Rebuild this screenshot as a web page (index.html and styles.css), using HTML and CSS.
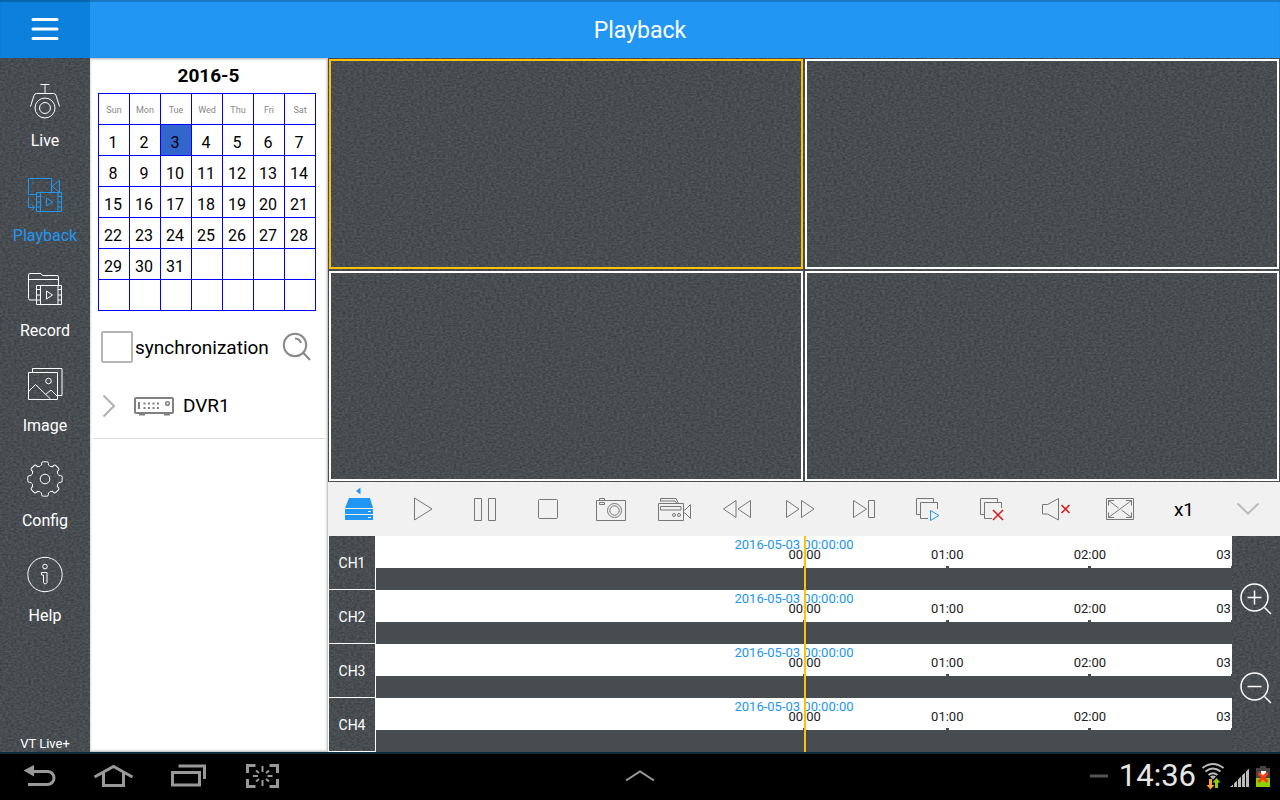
FILE: index.html
```html
<!DOCTYPE html>
<html lang="en">
<head>
<meta charset="utf-8">
<title>Playback</title>
<link rel="stylesheet" href="styles.css">
</head>
<body>
<svg class="defs" aria-hidden="true">
  <symbol id="film" viewBox="0 0 48 48">
    <path d="M15.5 20.500h25v19h-25zM19.500 20.500v19M37 20.500v19M15.500 24.500h4M15.500 30h4M15.500 35h4M37 24.500h3.500M37 30h3.500M37 35h3.500M25.500 26v8l6-4z"/>
  </symbol>
  <defs>
    <path id="tooth" d="M-5.200 -12.500Q-4 -14 -3.400 -14V-15.600Q-3.400 -17.200 -1.800 -17.200H1.800Q3.400 -17.200 3.400 -15.600V-14Q4 -14 5.200 -12.500"/>
  </defs>
</svg>

<header class="topbar">
  <button class="menu" aria-label="Menu">
    <svg width="48" height="48" viewBox="0 0 48 48"><path d="M12 14.500h24M12 24h24M12 33.500h24"/></svg>
  </button>
  <h1 class="topbar-title">Playback</h1>
</header>

<main class="app">
  <nav class="sidebar">
    <a class="side-item" href="#live">
      <svg class="side-icon" viewBox="0 0 48 48"><path d="M19.500 7.500h9M24 7.500v9M9.500 29.500L13 18.500Q13.700 16.500 15.500 16.500H32.500Q34.300 16.500 35 18.500L38.500 29.500"/><circle cx="24" cy="31" r="10"/><circle cx="24" cy="31" r="5.500"/></svg>
      Live</a>
    <a class="side-item active" href="#playback">
      <svg class="side-icon" viewBox="0 0 48 48"><path d="M15.500 22.500H7.500V6.500H30.500V20.500M38.500 20V8.500L31 14.500zM11.500 11h1M7.500 25.500V35.500H13M10.500 32.500l3 3-3 3"/><use href="#film"/></svg>
      Playback</a>
    <a class="side-item" href="#record">
      <svg class="side-icon" viewBox="0 0 48 48"><path d="M15.500 33H9Q7.500 33 7.500 31.500V8Q7.500 6.500 9 6.500H20L21.500 8.500H36Q37.500 8.500 37.500 10V18.500M7.500 12.500h30"/><use href="#film" y="-2"/></svg>
      Record</a>
    <a class="side-item" href="#image">
      <svg class="side-icon" viewBox="0 0 48 48"><path d="M7.500 10.500h29v27h-29zM11.500 10.500V6.500H41V33.500H36.500M7.500 29.500L14.500 22.500L29.500 37M24.500 32.500L30 28L36.500 34.500"/><circle cx="27.500" cy="19" r="2.800"/></svg>
      Image</a>
    <a class="side-item" href="#config">
      <svg class="side-icon" viewBox="-24 -22 48 48"><circle r="4.800"/><use href="#tooth"/><use href="#tooth" transform="rotate(45)"/><use href="#tooth" transform="rotate(90)"/><use href="#tooth" transform="rotate(135)"/><use href="#tooth" transform="rotate(180)"/><use href="#tooth" transform="rotate(225)"/><use href="#tooth" transform="rotate(270)"/><use href="#tooth" transform="rotate(315)"/></svg>
      Config</a>
    <a class="side-item" href="#help">
      <svg class="side-icon" viewBox="0 0 48 48"><circle cx="24" cy="22.500" r="17.200"/><circle cx="24" cy="14.500" r="2.300"/><path d="M20.500 20.500h5.500v10a1.800 1.800 0 0 1-3.500 0v-7.500h-2z"/></svg>
      Help</a>
    <p class="brand">VT Live+</p>
  </nav>

  <aside class="panel">
    <h2 class="month">2016-5</h2>
    <table class="calendar">
      <thead><tr><th>Sun</th><th>Mon</th><th>Tue</th><th>Wed</th><th>Thu</th><th>Fri</th><th>Sat</th></tr></thead>
      <tbody>
        <tr><td>1</td><td>2</td><td class="today">3</td><td>4</td><td>5</td><td>6</td><td>7</td></tr>
        <tr><td>8</td><td>9</td><td>10</td><td>11</td><td>12</td><td>13</td><td>14</td></tr>
        <tr><td>15</td><td>16</td><td>17</td><td>18</td><td>19</td><td>20</td><td>21</td></tr>
        <tr><td>22</td><td>23</td><td>24</td><td>25</td><td>26</td><td>27</td><td>28</td></tr>
        <tr><td>29</td><td>30</td><td>31</td><td></td><td></td><td></td><td></td></tr>
        <tr><td></td><td></td><td></td><td></td><td></td><td></td><td></td></tr>
      </tbody>
    </table>
    <div class="sync">
      <input type="checkbox" id="sync" class="sync-box">
      <label for="sync">synchronization</label>
      <button class="search" aria-label="Search">
        <svg width="32" height="32" viewBox="0 0 32 32"><circle cx="14" cy="14" r="11.200"/><path d="M14 7.500a6.500 6.500 0 0 1 6 4.500M22 21.500l7 7.500"/></svg>
      </button>
    </div>
    <button class="device">
      <svg width="16" height="24" viewBox="0 0 16 24"><path class="arrow" d="M2.500 1.500L13 12L2.500 22.500"/></svg>
      <svg width="42" height="20" viewBox="0 0 42 20"><rect x="2" y="2" width="38" height="15" rx="1"/><circle cx="34.500" cy="7.500" r="1.800" stroke-width="1.500"/><path d="M6 6v7" stroke-width="2"/><path stroke-dasharray="2 2.500" stroke-width="1.800" d="M10.500 7.500h17.500M10.500 12h17.500"/><path d="M6 18.500h6M31 18.500h6" stroke-width="2"/></svg>
      <span>DVR1</span>
    </button>
  </aside>

  <section class="content">
    <div class="screens">
      <div class="screen selected"></div>
      <div class="screen"></div>
      <div class="screen"></div>
      <div class="screen"></div>
    </div>

    <div class="toolbar">
      <button aria-label="Devices"><svg class="solid" viewBox="0 0 48 48"><path d="M20 6l4.500-3.500v7zM13 13H34L37 23H9zM9 24h28v5H9zM9 30h28v5H9z"/><path class="slot" d="M32 26h3v1h-3zM32 32h3v1h-3z"/></svg></button>
      <button aria-label="Play"><svg viewBox="0 0 48 48"><path d="M15.500 13V35L33 24z"/></svg></button>
      <button aria-label="Pause"><svg viewBox="0 0 48 48"><path d="M12.500 13.500h7v22h-7zM26.500 13.500h7v22h-7z"/></svg></button>
      <button aria-label="Stop"><svg viewBox="0 0 48 48"><rect x="13.500" y="14.500" width="19" height="19" rx="1"/></svg></button>
      <button aria-label="Snapshot"><svg viewBox="0 0 48 48"><path d="M8.500 15.500h29v20h-29zM11.500 15.500v-2h5v2M11.500 17.500h5v2h-5z"/><circle cx="26.500" cy="25.500" r="7"/><circle cx="26.500" cy="25.500" r="4.700"/></svg></button>
      <button aria-label="Record"><svg viewBox="0 0 48 48"><path d="M7.500 18.500h25v17h-25zM9.500 21.500h20.500v3.500h-20.500zM32.500 25h1.500l5.500-5.500V33.500l-5.500-5.500h-1.500M9.500 16.500v-3H25l2.500 5M9.500 16h14.500l2 2.500"/><circle cx="23" cy="30" r="1.500"/><circle cx="28" cy="30" r="1.500"/></svg></button>
      <button aria-label="Rewind"><svg viewBox="0 0 48 48"><path d="M9.500 24L22 15.500V32.500zM24 24L36.500 15.500V32.500z"/></svg></button>
      <button aria-label="Fast forward"><svg viewBox="0 0 48 48"><path d="M9.500 15.500v17L22 24zM24.500 15.500v17L37 24z"/></svg></button>
      <button aria-label="Next frame"><svg viewBox="0 0 48 48"><path d="M13.500 15.500v17L26.500 24zM28.500 15.500h6v17h-6z"/></svg></button>
      <button aria-label="Play all"><svg viewBox="0 0 48 48"><path d="M17 29.500H12.500V13.500H29.500V17.500M24 33.500H16.500V17.500H33.500V24"/><path class="blue" d="M26.500 25.500v10l8.500-5z"/></svg></button>
      <button aria-label="Stop all"><svg viewBox="0 0 48 48"><path d="M17 29.500H12.500V13.500H29.500V17.500M24 33.500H16.500V17.500H33.500V23"/><path class="red" d="M25 25l10 10M35 25l-10 10"/></svg></button>
      <button aria-label="Mute"><svg viewBox="0 0 48 48"><path d="M10.500 19.500h5L26.500 13.500v21.500L15.500 29h-5z"/><path class="red" d="M29.500 20l8 8M37.500 20l-8 8"/></svg></button>
      <button aria-label="Full screen"><svg viewBox="0 0 48 48"><path d="M10.500 13.500h27v21h-27zM12.500 15.500l10 7.500M35.500 15.500L12.500 32.500M25.500 25l10 7.500M12.500 20.500v-5h5.500M30 15.500h5.500v5M12.500 27.500v5h5.500M30 32.500h5.500v-5"/></svg></button>
      <button class="speed">x1</button>
      <button aria-label="Collapse"><svg class="collapse" viewBox="0 0 48 48"><path d="M13.500 18.500l10.500 10 10.500-10"/></svg></button>
    </div>

    <div class="timeline">
      <div class="channels"><span>CH1</span><span>CH2</span><span>CH3</span><span>CH4</span></div>
      <div class="tracks">
        <div class="track"><div class="ruler"><time class="stamp">2016-05-03 00:00:00</time><ol class="hours"><li>00:00</li><li>01:00</li><li>02:00</li><li>03:00</li></ol></div></div>
        <div class="track"><div class="ruler"><time class="stamp">2016-05-03 00:00:00</time><ol class="hours"><li>00:00</li><li>01:00</li><li>02:00</li><li>03:00</li></ol></div></div>
        <div class="track"><div class="ruler"><time class="stamp">2016-05-03 00:00:00</time><ol class="hours"><li>00:00</li><li>01:00</li><li>02:00</li><li>03:00</li></ol></div></div>
        <div class="track"><div class="ruler"><time class="stamp">2016-05-03 00:00:00</time><ol class="hours"><li>00:00</li><li>01:00</li><li>02:00</li><li>03:00</li></ol></div></div>
        <div class="cursor"></div>
      </div>
      <div class="zoomers">
        <button aria-label="Zoom in"><svg width="48" height="48" viewBox="0 0 48 48"><circle cx="22.500" cy="22.500" r="13.500"/><path d="M15.500 22.500h14M22.500 15.500v14M32.500 32.500l6.500 6.500"/></svg></button>
        <button aria-label="Zoom out"><svg width="48" height="48" viewBox="0 0 48 48"><circle cx="22.500" cy="22.500" r="13.500"/><path d="M15.500 22.500h14M32.500 32.500l6.500 6.500"/></svg></button>
      </div>
    </div>
  </section>
</main>

<footer class="sysbar">
  <div class="sys-keys">
    <button aria-label="Back"><svg width="48" height="48" viewBox="0 0 48 48"><path d="M17 19.500H31.500a6.500 6.500 0 0 1 0 13H12"/><path class="fill" d="M7.500 18.500L18 13v11.500z"/></svg></button>
    <button aria-label="Home"><svg width="48" height="48" viewBox="0 0 48 48"><path d="M4.500 25L23.500 14.500L42.500 25M13.500 21V33.500H33.500V21"/></svg></button>
    <button aria-label="Recent apps"><svg width="48" height="48" viewBox="0 0 48 48"><path d="M8.500 20.500h27v12.500h-27zM14.500 14H40.500V27"/></svg></button>
    <button aria-label="Screenshot"><svg width="48" height="48" viewBox="0 0 48 48"><path d="M9.500 21V13.500H17.500M31.500 13.500H39.500V21M39.500 27V34.500H31.500M17.500 34.500H9.500V27"/><path class="rays" d="M24.500 14v6M24.500 28v6M15 24h5M29.500 24h5M18 18.500l3 2.500M31 18.500l-3 2.500M18 29.500l3-2.500M31 29.500l-3-2.500"/></svg></button>
  </div>
  <button class="expand" aria-label="Show tray"><svg width="48" height="48" viewBox="0 0 48 48"><path d="M10 28.500L24 19.500L38 28.500"/></svg></button>
  <div class="status">
    <svg width="20" height="24" viewBox="0 0 20 24"><path class="dash" d="M1 12h18"/></svg>
    <time class="clock">14:36</time>
    <svg width="24" height="28" viewBox="0 0 24 28"><path class="wifi" d="M1.500 6q10.500-8 21 0M4.500 9.500q7.500-6 15 0M7.500 13q4.500-3.500 9 0"/><path class="wifi-dot" d="M9 14.500q3-2 6 0l-3 3z"/><path class="down" d="M8 17h3v6h2.500L9.500 27.500L5.500 23H8z"/><path class="up" d="M14 26V20.500h-2.500L15.500 16l4 4.500H17V26z"/></svg>
    <svg width="20" height="28" viewBox="0 0 20 28"><path class="wifi-dot" d="M0 25l3-2.500v2.500zM4 25v-3.500l3-3v6.500zM8 25v-7.500l3-3v10.500zM12 25v-11.500l3-3v14.500zM16 25v-15.500l3-3v18.500z"/></svg>
    <svg width="16" height="28" viewBox="0 0 16 28"><path class="cell" d="M1 6h4v-2h6v2h4v10H1z"/><path class="charge" d="M1 16h14v9H1z"/><path class="white" d="M6 9h5v6H6z"/><path class="cross" d="M3.500 11l9 9M12.500 11l-9 9"/></svg>
  </div>
</footer>
</body>
</html>
```

FILE: styles.css
```css
:root {
  --blue: #2196f3;
  --slate: #474c50;
  --texture: url("data:image/svg+xml,%3Csvg xmlns='http://www.w3.org/2000/svg' width='960' height='720'%3E%3Cfilter id='n' x='0' y='0' width='100%25' height='100%25' color-interpolation-filters='sRGB'%3E%3CfeTurbulence type='fractalNoise' baseFrequency='.35 .55' numOctaves='2' seed='4' stitchTiles='stitch'/%3E%3CfeColorMatrix values='.17 0 0 0 .195 .17 0 0 0 .215 .17 0 0 0 .23 0 0 0 0 1'/%3E%3C/filter%3E%3Crect width='960' height='720' filter='url(%23n)'/%3E%3C/svg%3E");
}

* { box-sizing: border-box; }

body {
  margin: 0;
  min-height: 100vh;
  display: flex;
  flex-direction: column;
  background: #000;
  font-family: Roboto, "Noto Sans", sans-serif;
  font-size: 16px;
  line-height: 20px;
}

h1, h2, p, ol { margin: 0; padding: 0; }

button {
  border: 0;
  padding: 0;
  background: none;
  color: inherit;
  font: inherit;
  cursor: pointer;
}

svg {
  display: block;
  flex: none;
  fill: none;
  stroke: currentColor;
}

.defs { position: absolute; width: 0; height: 0; }

/* Header */
.topbar {
  display: flex;
  height: 58px;
  background: var(--blue);
  box-shadow: inset 0 2px 1px #1a77c2;
  color: #fff;
}

.menu {
  width: 90px;
  display: grid;
  place-items: center;
  background: #0c80dc;
  box-shadow: inset 0 2px 1px #0a66af;
}

.menu svg { stroke-width: 3; stroke-linecap: round; }

.topbar-title {
  flex: 1;
  padding: 3px 90px 0 0;
  font-size: 23px;
  font-weight: 400;
  line-height: 55px;
  text-align: center;
}

.app {
  flex: 1;
  display: flex;
  background: var(--slate) var(--texture);
}

/* Sidebar */
.sidebar {
  width: 90px;
  display: flex;
  flex-direction: column;
  padding-top: 19px;
}

.side-item {
  display: flex;
  flex-direction: column;
  align-items: center;
  gap: 6px;
  margin-bottom: 21px;
  color: #fff;
  text-decoration: none;
}

.side-item.active { color: var(--blue); }

.side-icon { width: 48px; height: 48px; }

.brand {
  margin-top: auto;
  color: #fff;
  font-size: 13px;
  line-height: 16px;
  text-align: center;
}

/* Calendar and devices */
.panel {
  width: 238px;
  background: #fff;
  border: solid #c8c8c8;
  border-width: 1px 1px 1px 0;
  box-shadow: inset 0 0 2px 1px #ddd;
}

.month {
  padding-top: 5px;
  font-size: 19px;
  line-height: 24px;
  text-align: center;
}

.calendar {
  margin: 5px 0 0 8px;
  border-collapse: collapse;
  table-layout: fixed;
  width: 218px;
  text-align: center;
}

.calendar th,
.calendar td {
  height: 31px;
  padding: 0;
  border: 1px solid #00f;
}

.calendar th { padding-top: 2px; color: #888; font-size: 9px; font-weight: 400; }
.calendar td { padding: 6px 2px 0 0; }
.calendar .today { background: #3366cc; }

.sync {
  display: flex;
  align-items: center;
  height: 32px;
  margin: 20px 0 0 11px;
  font-size: 19px;
}

.sync label { padding-top: 2px; }

.sync-box {
  appearance: none;
  width: 32px;
  height: 32px;
  margin: 0 2px 0 0;
  background: #fff;
  border: 2px solid #b5b5b5;
  border-radius: 2px;
}

.search { margin-left: 12px; color: #888; }
.search svg { stroke-width: 2; }

.device {
  display: flex;
  align-items: center;
  width: 232px;
  height: 66px;
  margin: 10px 0 0 3px;
  padding: 1px 0 0 8px;
  border-bottom: 1px solid #ddd;
  font-size: 19px;
}

.device svg { margin-right: 16px; color: #808080; stroke-width: 2; }
.device svg + svg { margin-right: 8px; }
.device .arrow { stroke: #b0b0b0; }

/* Video grid */
.content {
  flex: 1;
  min-width: 0;
  display: flex;
  flex-direction: column;
}

.screens {
  flex: 1;
  display: grid;
  grid-template: 1fr 1fr / 1fr 1fr;
  gap: 2px;
  padding: 1px;
}

.screen { border: 2px solid #fff; }
.screen.selected { border-color: #ffc107; }

/* Player controls */
.toolbar {
  display: grid;
  grid-template-columns: repeat(8, 63fr) repeat(7, 64fr);
  height: 54px;
  background: #f1f1f1;
  color: #777;
}

.toolbar button {
  display: flex;
  padding: 3px 0 0 8px;
}

.toolbar svg { width: 48px; height: 48px; }
.toolbar .solid { fill: var(--blue); stroke: none; }
.toolbar .slot { fill: #fff; }
.toolbar .blue { stroke: var(--blue); }
.toolbar .red { stroke: #dd1515; stroke-width: 1.5; }
.toolbar .collapse { color: #bbb; stroke-width: 2; }

.toolbar .speed {
  justify-content: center;
  align-items: center;
  padding: 2px 0 0;
  color: #000;
  font-size: 19px;
}

/* Timeline */
.timeline {
  display: grid;
  grid-template-columns: 48px 1fr 48px;
  height: 216px;
}

.channels {
  display: grid;
  grid-template-rows: repeat(4, 1fr);
  padding-left: 1px;
  background: linear-gradient(90deg, #fff 1px, transparent 1px);
  color: #fff;
  font-size: 14px;
}

.channels span {
  display: grid;
  place-items: center;
  padding-top: 1px;
  border: solid #fff;
  border-width: 0 1px 1px 0;
}

.tracks {
  position: relative;
  display: grid;
  grid-template-rows: repeat(4, 1fr);
  background: var(--slate);
  font-size: 13px;
  line-height: 16px;
}

.ruler {
  height: 32px;
  padding-top: 1px;
  overflow: hidden;
  background: #fff;
}

.stamp {
  display: block;
  padding-right: 20px;
  color: var(--blue);
  text-align: center;
}

.hours {
  display: flex;
  height: 21px;
  margin-top: -6px;
  padding-left: 41.75%;
  color: #222;
  list-style: none;
}

.hours li {
  flex: 0 0 28.6%;
  display: flex;
  flex-direction: column;
  align-items: center;
}

.hours li::after {
  content: "";
  width: 3px;
  height: 2px;
  margin-top: auto;
  background: var(--slate);
}

.cursor {
  position: absolute;
  inset: 0 auto 0 50%;
  width: 2px;
  background: #ffc107;
}

.zoomers {
  display: flex;
  flex-direction: column;
  gap: 41px;
  padding-top: 39px;
  color: #fff;
}

.zoomers svg { stroke-width: 1.5; }

/* System bar */
.sysbar {
  display: grid;
  grid-template-columns: 1fr 48px 1fr;
  height: 48px;
  border-top: 2px solid #0c2b3a;
  background: #000;
  color: #999;
}

.sysbar svg { stroke-width: 3; }

.sys-keys {
  display: flex;
  gap: 26px;
  padding-left: 16px;
}

.sysbar button { height: 46px; }
.sysbar button svg { margin-top: -2px; }
.sysbar .fill { fill: currentColor; stroke: none; }
.sysbar .rays { stroke-width: 2; }
.sysbar .expand svg { stroke-width: 2; }

.status {
  display: flex;
  align-items: center;
  justify-content: flex-end;
  gap: 5px;
  padding: 0 9px 2px 0;
}

.status .dash { stroke: #555; }

.clock {
  margin-left: 5px;
  color: #e6e6e6;
  font-size: 31px;
  line-height: 40px;
}

.status .wifi { stroke: #bbb; stroke-width: 2; }
.status .wifi-dot { fill: #bbb; stroke: none; }
.status .down { fill: #ffa033; stroke: none; }
.status .up { fill: #8fd000; stroke: none; }
.status .cell { fill: #444; stroke: none; }
.status .charge { fill: #8fd000; stroke: none; }
.status .white { fill: #fff; stroke: none; }
.status .cross { stroke: #ff3b14; }
```
